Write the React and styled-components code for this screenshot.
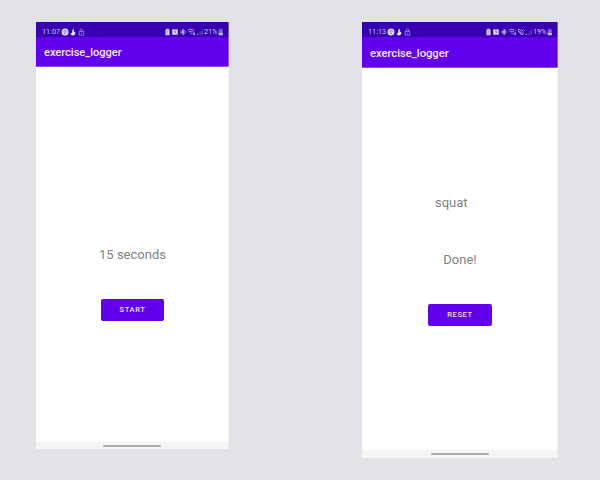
import React from "react";
import styled, { createGlobalStyle } from "styled-components";

const GlobalStyle = createGlobalStyle`
  * { box-sizing: border-box; }
  body { margin: 0; background: #e2e3e8; font-family: Roboto, sans-serif; }
`;

const Stage = styled.main`
  width: 600px;
  height: 480px;
  display: flex;
  align-items: flex-start;
  justify-content: space-between;
  padding: 22px 42px 0 36px;
  background: #e2e3e8;
  overflow: hidden;
`;

const Phone = styled.section`
  position: relative;
  width: ${(p) => p.$width}px;
  height: ${(p) => p.$height}px;
  display: flex;
  flex-direction: column;
  background: #fff;

  /* soft right edge of the device screen */
  &::after {
    content: "";
    position: absolute;
    top: 0;
    right: 0;
    bottom: 0;
    width: 1px;
    background: rgba(226, 227, 232, 0.4);
  }
`;

const StatusBar = styled.header`
  height: 15px;
  flex: none;
  display: flex;
  justify-content: space-between;
  align-items: center;
  padding: 5px 5.6px 0 6px;
  background: #3700b3;
  color: #cdc0ee;
  font-size: 7.3px;
  line-height: 10px;
`;

const StatusGroup = styled.div`
  display: flex;
  align-items: center;
`;

const Clock = styled.span`
  width: 19px;
  white-space: nowrap;
`;

const Percent = styled.span`
  width: 14px;
  white-space: nowrap;
  letter-spacing: -0.1px;
`;

const Glyph = styled.svg`
  width: ${(p) => p.$w}px;
  height: 8px;
  flex: none;
  display: block;
`;

const AppBar = styled.div`
  height: ${(p) => p.$height}px;
  flex: none;
  display: flex;
  align-items: center;
  padding: 2px 0 0 8px;
  background: #6200ee;
  border-bottom: 1px solid #8c4df0;
  color: #f4edff;
  font-size: ${(p) => p.$size}px;
  font-weight: 500;
`;

const Content = styled.div`
  flex: 1;
  display: flex;
  flex-direction: column;
  align-items: center;
  padding-top: ${(p) => p.$top}px;
`;

const Label = styled.div`
  height: 18px;
  line-height: 18px;
  font-size: 13px;
  color: #828282;
  margin: 0 ${(p) => p.$right || 0}px ${(p) => p.$gap}px 0;
  white-space: nowrap;
`;

const Button = styled.button`
  width: ${(p) => p.$width}px;
  height: 22px;
  border: 0;
  border-radius: 2px;
  padding: 0;
  background: #6200ee;
  color: #eee4fd;
  font: 500 ${(p) => p.$size}px/22px Roboto, sans-serif;
  letter-spacing: 0.6px;
`;

const NavBar = styled.footer`
  height: ${(p) => p.$height}px;
  flex: none;
  display: flex;
  justify-content: center;
  align-items: flex-start;
  padding: 3px 1px 0 0;
  background: #f5f5f5;
`;

const Handle = styled.div`
  width: 58px;
  height: 2px;
  border-radius: 1px;
  background: #acacac;
`;

const Chat = () => (
  <Glyph $w={8} viewBox="0 0 8 8">
    <circle cx="4" cy="4" r="3.5" fill="#e2daf6" />
    <path d="M2.3 3.5 4 2.6l1.7.9M2.8 5.2h2.4" stroke="#6847bd" strokeWidth=".8" fill="none" />
  </Glyph>
);
const Flame = () => (
  <Glyph $w={8} viewBox="0 0 8 8">
    <path d="M4.8.5v3c1 .3 1.5 1 1.5 1.8 0 1.3-1 2.1-2.4 2.1S1.600 6.600 1.500 5.500c.8-.1 1.4-.4 1.700-1V2.200z" fill="#eee8fb" />
  </Glyph>
);
const Lock = () => (
  <Glyph $w={9} viewBox="0 0 9 8">
    <path d="M2.2 3.5h4.6v3.7H2.2zM3.2 3.4V2.2a1.3 1.3 0 0 1 2.6 0v1.2M4.5 4.7v1.2" stroke="#a994dd" strokeWidth=".8" fill="none" />
  </Glyph>
);
const Recycle = () => (
  <Glyph $w={7} viewBox="0 0 7 8">
    <path d="M2.5.8h2v.7h1v5.7h-4V1.500h1z" fill="#ded5f5" />
    <path d="M2.8 3.3h1.400M2.8 5h1.400" stroke="#7556c4" strokeWidth=".6" />
  </Glyph>
);
const Alarm = () => (
  <Glyph $w={8} viewBox="0 0 8 8">
    <path d="M1.200 1.300h1.900l.9.5.9-.5h1.900v5.400H1.200z" fill="#ded5f5" />
    <path d="M4 2.8v1.500h1.200" stroke="#4d20b5" strokeWidth=".7" fill="none" />
  </Glyph>
);
const Bluetooth = () => (
  <Glyph $w={8} viewBox="0 0 8 8">
    <path d="M2.200 2.500 5.500 5.300 4 6.700V1.300l1.500 1.400-3.300 2.800M1 4h1.300M5.700 4H7" stroke="#cabcee" strokeWidth="1" fill="none" />
  </Glyph>
);
const Wifi = () => (
  <Glyph $w={8.5} viewBox="0 0 8.5 8">
    <path d="M.6 2.600C2.600.8 5.400.8 7.400 2.600M1.700 4.100c1.400-1.200 3.200-1.200 4.600 0M3 5.500c.7-.5 1.400-.5 2.100 0M6.200 4.500v2.500M7.500 4.500v2.500" stroke="#ad99df" strokeWidth="1" fill="none" />
  </Glyph>
);
const Call = () => (
  <Glyph $w={8} viewBox="0 0 8 8">
    <path d="M1.300 1.600c.1 2.700 1.800 4.600 4.600 5l.6-1.300-1.300-.7-.8.6c-.8-.4-1.300-1-1.600-1.800l.6-.8-.7-1.400zM4.500 1.500l2 2m0-2-2 2" stroke="#bcaae6" strokeWidth=".9" fill="none" />
  </Glyph>
);
const Signal = () => (
  <Glyph $w={8} viewBox="0 0 8 8">
    <path d="M3.200 6.900V5M4.800 6.900V3.200M6.400 6.900V1.400" stroke="#7050c4" strokeWidth=".8" />
    <path d="M.7 6.500h1.200" stroke="#c6b7ec" strokeWidth="1" />
  </Glyph>
);
const Battery = () => (
  <Glyph $w={5.5} viewBox="0 0 5.5 8">
    <path d="M1.800.8h1.900v.8h1.100v5.600H.7V1.600h1.100z" fill="#8264cc" />
    <path d="M.7 5h4.100v2.200H.7z" fill="#c4b4eb" />
  </Glyph>
);

function Screen({ width, height, time, battery, inCall, barHeight, titleSize, top, navHeight, children }) {
  return (
    <Phone $width={width} $height={height}>
      <StatusBar>
        <StatusGroup>
          <Clock>{time}</Clock>
          <Chat />
          <Flame />
          <Lock />
        </StatusGroup>
        <StatusGroup>
          <Recycle />
          <Alarm />
          <Bluetooth />
          <Wifi />
          {inCall && <Call />}
          <Signal />
          <Percent>{battery}</Percent>
          <Battery />
        </StatusGroup>
      </StatusBar>
      <AppBar $height={barHeight} $size={titleSize}>exercise_logger</AppBar>
      <Content $top={top}>{children}</Content>
      <NavBar $height={navHeight}>
        <Handle />
      </NavBar>
    </Phone>
  );
}

export default function App() {
  return (
    <>
      <GlobalStyle />
      <Stage>
        <Screen width={193} height={427} time="11:07" battery="21%" barHeight={30} titleSize={11.05} top={179} navHeight={7}>
          <Label $gap={35}>15 seconds</Label>
          <Button $width={63} $size={7.5}>START</Button>
        </Screen>
        <Screen width={196} height={436} time="11:13" battery="19%" inCall barHeight={31} titleSize={11.2} top={126} navHeight={8}>
          <Label $gap={39} $right={17.5}>squat</Label>
          <Label $gap={35}>Done!</Label>
          <Button $width={64} $size={7.6}>RESET</Button>
        </Screen>
      </Stage>
    </>
  );
}
